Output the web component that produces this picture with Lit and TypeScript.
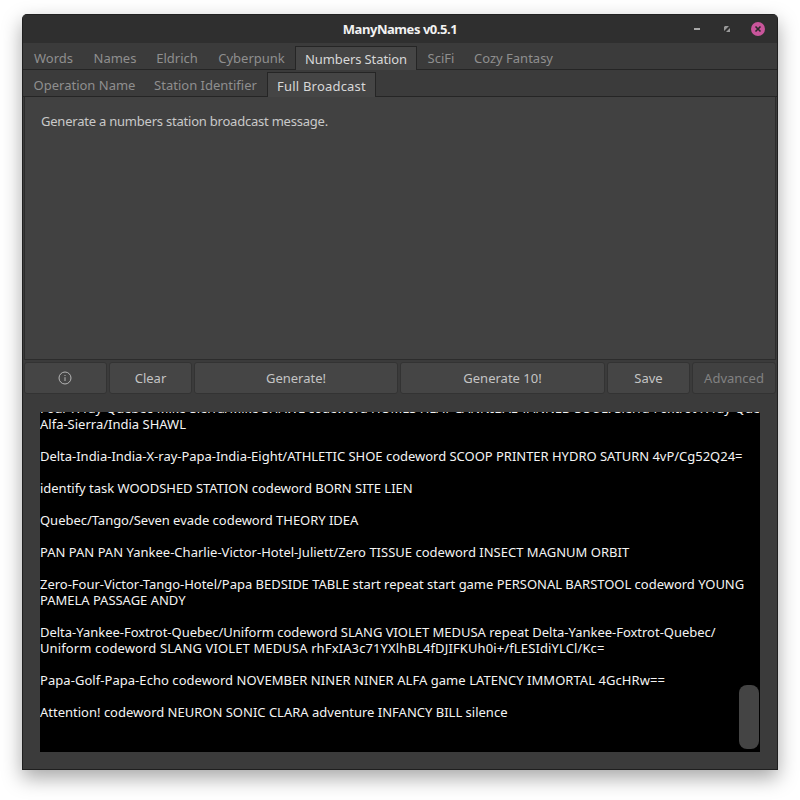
import { LitElement, html, css } from "lit";
import { customElement } from "lit/decorators.js";

const BLOCKS: { lines: [string, number][] }[] = [
  { lines: [["Four-X-ray-Quebec-Mike-Sierra/Mike SHAWL codeword HOMES HEAT CANNIBAL TANNED SOUL. Sierra-Foxtrot-X-ray-Quebec-", -0.1], ["Alfa-Sierra/India SHAWL", 0]] },
  { lines: [["Delta-India-India-X-ray-Papa-India-Eight/ATHLETIC SHOE codeword SCOOP PRINTER HYDRO SATURN 4vP/Cg52Q24=", -0.02]] },
  { lines: [["identify task WOODSHED STATION codeword BORN SITE LIEN", -0.02]] },
  { lines: [["Quebec/Tango/Seven evade codeword THEORY IDEA", -0.03]] },
  { lines: [["PAN PAN PAN Yankee-Charlie-Victor-Hotel-Juliett/Zero TISSUE codeword INSECT MAGNUM ORBIT", 0.01]] },
  { lines: [["Zero-Four-Victor-Tango-Hotel/Papa BEDSIDE TABLE start repeat start game PERSONAL BARSTOOL codeword YOUNG", -0.02], ["PAMELA PASSAGE ANDY", -0.02]] },
  { lines: [["Delta-Yankee-Foxtrot-Quebec/Uniform codeword SLANG VIOLET MEDUSA repeat Delta-Yankee-Foxtrot-Quebec/", -0.02], ["Uniform codeword SLANG VIOLET MEDUSA rhFxIA3c71YXlhBL4fDJIFKUh0i+/fLESIdiYLCl/Kc=", 0.12]] },
  { lines: [["Papa-Golf-Papa-Echo codeword NOVEMBER NINER NINER ALFA game LATENCY IMMORTAL 4GcHRw==", 0.05]] },
  { lines: [["Attention! codeword NEURON SONIC CLARA adventure INFANCY BILL silence", 0]] },
];

@customElement("app-root")
export class AppRoot extends LitElement {
  static styles = css`
    :host {
      display: block;
      width: 800px;
      height: 800px;
      background: #fff;
      padding: 14px 22px 0;
      box-sizing: border-box;
      font-family: "Noto Sans", sans-serif;
      font-size: 13px;
    }
    .win {
      width: 756px;
      height: 756px;
      box-sizing: border-box;
      background: #3b3b3b;
      border: 1px solid #1f1f1f;
      border-top-color: #222;
      border-radius: 5px 5px 0 0;
      box-shadow: 0 8px 20px rgba(0, 0, 0, 0.35);
      display: flex;
      flex-direction: column;
      overflow: hidden;
    }
    .title {
      height: 28px;
      background: #2f2f2f;
      display: grid;
      grid-template-columns: 1fr auto 1fr;
      align-items: center;
      flex: none;
    }
    .title b {
      grid-column: 2;
      color: #f2f2f2;
      font-size: 13px;
      font-weight: 700;
      letter-spacing: -0.45px;
    }
    .wbtns {
      grid-column: 3;
      justify-self: end;
      display: flex;
      align-items: center;
      padding-right: 12px;
    }
    .wbtns svg { display: block; }
    .tabs {
      flex: none;
      display: flex;
      height: 27px;
      border-bottom: 1px solid #252525;
      box-sizing: border-box;
      color: #8f8f8f;
    }
    .tabs.a { padding-top: 3px; }
    .tabs.b { padding-top: 2px; padding-left: 2px; }
    .tabs.b .tab { padding-top: 1px; }
    .tab {
      display: flex;
      align-items: center;
      justify-content: center;
      box-sizing: border-box;
      white-space: nowrap;
    }
    .tab.on {
      background: #454545;
      color: #d8d8d8;
      border: 1px solid #252525;
      border-bottom: none;
      margin-bottom: -1px;
    }
    .tabs.a .tab.on { letter-spacing: -0.1px; }
    .tabs.b .tab.on { letter-spacing: 0.2px; }
    .panel {
      flex: none;
      height: 263px;
      margin: 0 1px;
      box-sizing: border-box;
      background: #414141;
      border: 1px solid #2c2c2c;
      border-top: none;
      padding: 15px 16px;
      color: #c9c9c9;
      line-height: 18px;
      letter-spacing: -0.22px;
    }
    .btns {
      flex: none;
      display: flex;
      gap: 2px;
      height: 32px;
      margin: 2px 1px 0;
    }
    .btn {
      box-sizing: border-box;
      background: #454545;
      border: 1px solid #333;
      border-radius: 3px;
      color: #c4c4c4;
      display: flex;
      align-items: center;
      justify-content: center;
    }
    .btn svg { margin-right: 2px; }
    .btn.dis { color: #828282; background: #414141; }
    .out {
      flex: none;
      position: relative;
      margin: 18px 17px 0;
      width: 720px;
      height: 340px;
      background: #000;
      overflow: hidden;
      color: #f4f4f4;
    }
    .text {
      margin-top: -12px;
      line-height: 16px;
      white-space: nowrap;
    }
    .text p { margin: 0 0 16px; }
    .text span { display: block; }
    .thumb {
      position: absolute;
      right: 1px;
      top: 273px;
      width: 20px;
      height: 64px;
      border-radius: 8px;
      background: #444;
    }
  `;

  private tab(label: string, w: number, on = false) {
    return html`<div class="tab ${on ? "on" : ""}" style="width:${w}px">${label}</div>`;
  }
  private btn(label: unknown, w: number, dis = false) {
    return html`<div class="btn ${dis ? "dis" : ""}" style="width:${w}px">${label}</div>`;
  }

  render() {
    const info = html`<svg width="14" height="14" viewBox="0 0 14 14" fill="none">
      <circle cx="7" cy="7" r="6" stroke="#b5b5b5" stroke-width="1"></circle>
      <path d="M7 4v1M7 6.2V10" stroke="#b5b5b5" stroke-width="1"></path>
    </svg>`;
    return html`<div class="win">
      <div class="title">
        <b>ManyNames v0.5.1</b>
        <div class="wbtns">
          <svg width="8" height="4" viewBox="0 0 8 4"><rect x="1" y="1" width="6" height="2" fill="#a8a8a8"></rect></svg>
          <svg width="10" height="10" viewBox="0 0 10 10" style="margin:0 19px 0 21px">
            <path d="M3 2h4L2 7V3z M8 4v4H4z" fill="#9a9a9a"></path>
          </svg>
          <svg width="14" height="14" viewBox="0 0 14 14">
            <circle cx="7" cy="7" r="7" fill="#c9559b"></circle>
            <path d="M4.5 4.5l5 5M9.5 4.5l-5 5" stroke="#2a2a2a" stroke-width="1.6"></path>
          </svg>
        </div>
      </div>
      <div class="tabs a">
        ${this.tab("Words", 61)}${this.tab("Names", 62)}${this.tab("Eldrich", 62)}${this.tab("Cyberpunk", 87)}${this.tab("Numbers Station", 122, true)}${this.tab("SciFi", 48)}${this.tab("Cozy Fantasy", 97)}
      </div>
      <div class="tabs b">
        ${this.tab("Operation Name", 119)}${this.tab("Station Identifier", 123)}${this.tab("Full Broadcast", 109, true)}
      </div>
      <div class="panel">Generate a numbers station broadcast message.</div>
      <div class="btns">
        ${this.btn(info, 83)}${this.btn("Clear", 83)}${this.btn("Generate!", 204)}${this.btn("Generate 10!", 205)}${this.btn("Save", 83)}${this.btn("Advanced", 84, true)}
      </div>
      <div class="out">
        <div class="text">
          ${BLOCKS.map(
            (b) => html`<p>${b.lines.map(([l, t]) => html`<span style="letter-spacing:${t}px">${l}</span>`)}</p>`
          )}
        </div>
        <div class="thumb"></div>
      </div>
    </div>`;
  }
}
